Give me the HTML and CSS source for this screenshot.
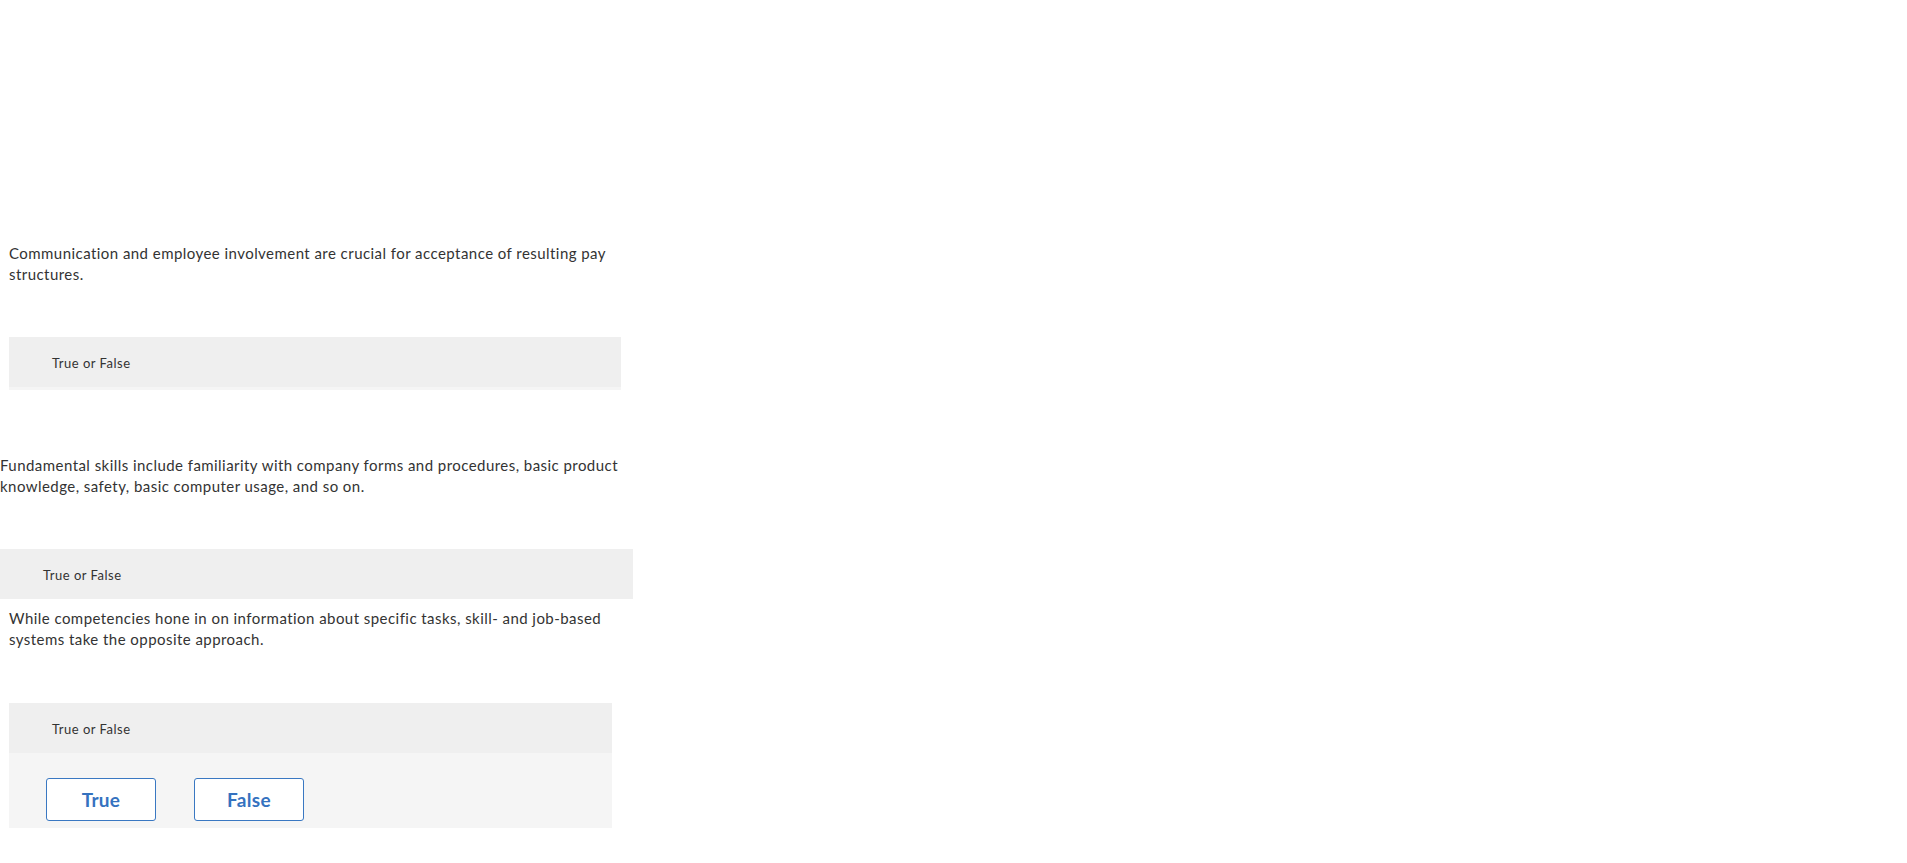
FILE: index.html
```html
<!DOCTYPE html>
<html lang="en">
<head>
<meta charset="utf-8">
<title>True or False</title>
<link rel="stylesheet" href="styles.css">
</head>
<body>
<main class="page">
  <section class="q q1">
    <p class="prompt">Communication and employee involvement are crucial for acceptance of resulting pay structures.</p>
    <div class="card">
      <div class="card-head">True or False</div>
      <div class="card-body"></div>
    </div>
  </section>
  <section class="q q2">
    <p class="prompt">Fundamental skills include familiarity with company forms and procedures, basic product knowledge, safety, basic computer usage, and so on.</p>
    <div class="card">
      <div class="card-head">True or False</div>
    </div>
  </section>
  <section class="q q3">
    <p class="prompt">While competencies hone in on information about specific tasks, skill- and job-based systems take the opposite approach.</p>
    <div class="card">
      <div class="card-head">True or False</div>
      <div class="card-body answers">
        <button class="btn" type="button">True</button>
        <button class="btn" type="button">False</button>
      </div>
    </div>
  </section>
</main>
</body>
</html>
```
FILE: styles.css
```css
html, body {
  margin: 0;
  padding: 0;
  background: #ffffff;
}
body {
  font-family: Lato, "Liberation Sans", Arial, sans-serif;
  color: #333333;
}
.page {
  padding-top: 243px;
  width: 640px;
}
.q1 {
  margin-left: 9px;
  width: 612px;
}
.q2 {
  margin-top: 65px;
  width: 633px;
}
.q3 {
  margin-top: 9px;
  margin-left: 9px;
  width: 603px;
}
.prompt {
  margin: 0;
  font-size: 15px;
  line-height: 21px;
  letter-spacing: 0.45px;
}
.card {
  margin-top: 52px;
}
.q3 .card {
  margin-top: 53px;
}
.card-head {
  height: 50px;
  box-sizing: border-box;
  padding: 2px 0 0 43px;
  display: flex;
  align-items: center;
  background: #efefef;
  font-size: 13px;
  letter-spacing: 0.5px;
  color: #333333;
}
.card-body {
  background: #f5f5f5;
  height: 3px;
}
.card-body.answers {
  height: auto;
  display: flex;
  gap: 38px;
  padding: 25px 0 7px 37px;
}
.btn {
  width: 110px;
  height: 43px;
  box-sizing: border-box;
  border: 1px solid #3a78c2;
  border-radius: 3px;
  background: #ffffff;
  color: #3572bf;
  font-family: Lato, "Liberation Sans", Arial, sans-serif;
  font-weight: 700;
  font-size: 19px;
  letter-spacing: 0.3px;
  padding: 0;
  cursor: pointer;
}
```
